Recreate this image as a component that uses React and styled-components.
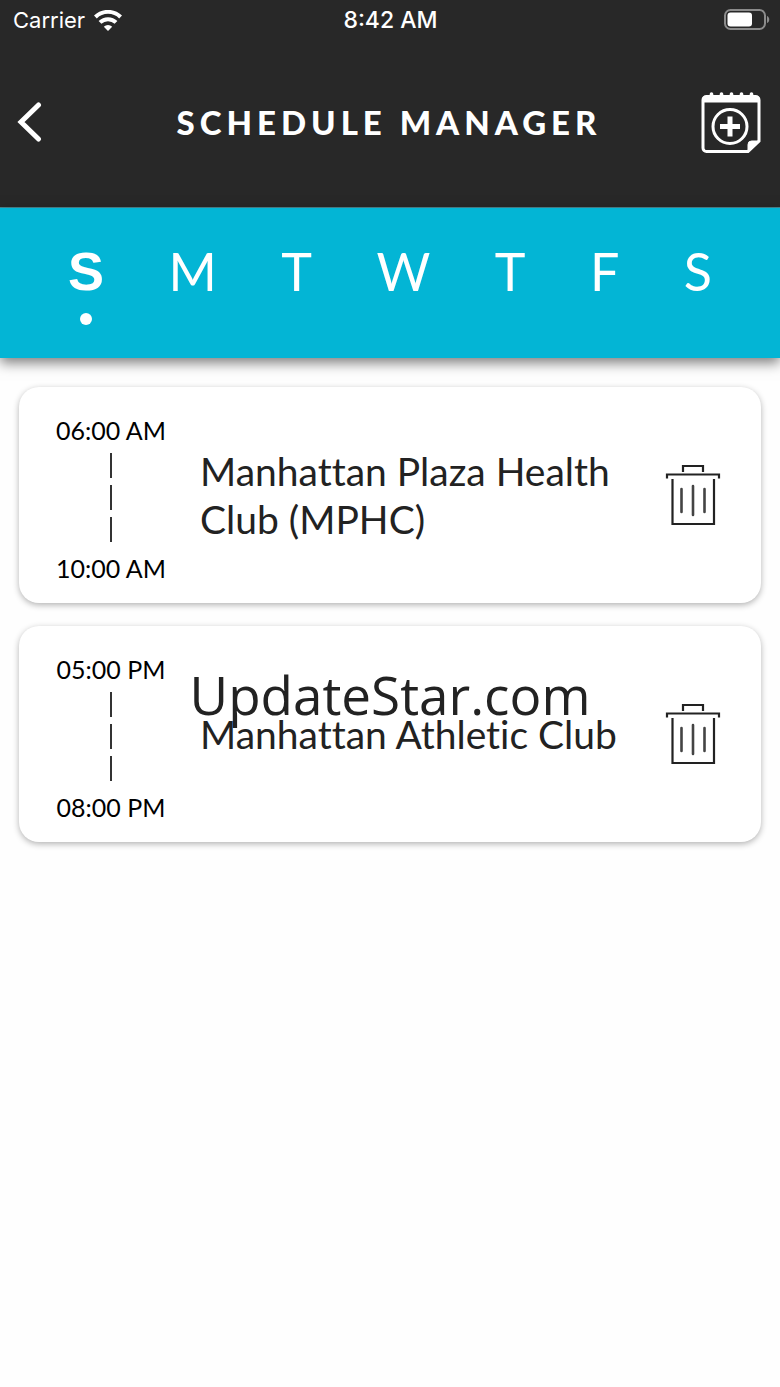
import React, { useState } from 'react'
import styled, { createGlobalStyle } from 'styled-components'

const days = ['S', 'M', 'T', 'W', 'T', 'F', 'S']
const dayNames = ['Sunday', 'Monday', 'Tuesday', 'Wednesday', 'Thursday', 'Friday', 'Saturday']

const slots = [
  { start: '06:00 AM', end: '10:00 AM', club: 'Manhattan Plaza Health Club (MPHC)' },
  { start: '05:00 PM', end: '08:00 PM', club: 'Manhattan Athletic Club' },
]

const WifiIcon = () => (
  <svg width="28" height="21" viewBox="0 0 28 21" fill="none" stroke="#fff" strokeWidth="4">
    <path d="M1.4 7a18 18 0 0 1 25.2 0" />
    <path d="M6 12.4a11.5 11.5 0 0 1 16 0" />
    <path d="M14 21l-4.2-4.2a6 6 0 0 1 8.4 0z" fill="#fff" stroke="none" />
  </svg>
)

const BatteryIcon = () => (
  <svg width="46" height="22" viewBox="0 0 46 22">
    <rect x="1" y="1" width="40" height="19" rx="5.5" fill="none" stroke="#8b8b8b" strokeWidth="2" />
    <rect x="3.5" y="3.5" width="24.5" height="14" rx="3" fill="#fff" />
    <path d="M43 7c3 1 3 6 0 7z" fill="#8b8b8b" />
  </svg>
)

const BackIcon = () => (
  <svg width="26" height="40" viewBox="0 0 26 40" fill="none" stroke="#fff" strokeWidth="5" strokeLinecap="round">
    <path d="M21.5 3L4 20l17.500 17" />
  </svg>
)

const AddIcon = () => (
  <svg width="60" height="62" viewBox="0 0 60 62" fill="none" stroke="#fff">
    <path d="M10.5 3v4M20.5 3v4M30.5 3v4M40.5 3v4M50.5 3v4" strokeWidth="3.6" strokeLinecap="round" />
    <path d="M5.5 5.5h49a3.5 3.500 0 0 1 3.5 3.5v41L47 60.5H5.5a3.5 3.5 0 0 1-3.5-3.5V9a3.5 3.5 0 0 1 3.5-3.5z" strokeWidth="3" />
    <path d="M1 9a4 4 0 0 1 4-4h50a4 4 0 0 1 4 4v2.5H1z" fill="#fff" stroke="none" />
    <path d="M47 60.5v-7a3.5 3.5 0 0 1 3.5-3.5H58z" fill="#fff" strokeWidth="1" />
    <circle cx="29" cy="35.5" r="17" strokeWidth="3" />
    <path d="M29 25.500v20M19 35.500h20" strokeWidth="5" />
  </svg>
)

const TrashIcon = () => (
  <svg width="56" height="62" viewBox="0 0 56 62" fill="none" stroke="#222" strokeWidth="2.2">
    <path d="M2 14.5v-4h52v4M18 8V2h20v6" />
    <path d="M7.5 15v45H49V15" />
    <path d="M16.5 25v23M28 22v29M39.5 25v23" stroke="#444" strokeWidth="2.6" strokeLinecap="round" />
  </svg>
)

const App = () => {
  const [active, setActive] = useState(0)

  return (
    <Page>
      <GlobalStyle />
      <Header>
        <StatusBar>
          <Carrier>
            Carrier <WifiIcon />
          </Carrier>
          <Clock>8:42 AM</Clock>
          <Battery>
            <BatteryIcon />
          </Battery>
        </StatusBar>
        <NavBar>
          <IconButton aria-label="Back">
            <BackIcon />
          </IconButton>
          <Title>SCHEDULE MANAGER</Title>
          <IconButton $end aria-label="Add schedule">
            <AddIcon />
          </IconButton>
        </NavBar>
      </Header>

      <DayBar>
        {days.map((day, i) => (
          <Day
            key={dayNames[i]}
            $active={i === active}
            aria-label={dayNames[i]}
            aria-pressed={i === active}
            onClick={() => setActive(i)}
          >
            {day}
            <Dot $active={i === active} />
          </Day>
        ))}
      </DayBar>

      <List>
        {slots.map((slot) => (
          <Card key={slot.club}>
            <Times>
              <span>{slot.start}</span>
              <Dashes>
                <i />
                <i />
                <i />
              </Dashes>
              <span>{slot.end}</span>
            </Times>
            <Club>{slot.club}</Club>
            <IconButton aria-label={`Delete ${slot.club}`}>
              <TrashIcon />
            </IconButton>
          </Card>
        ))}
      </List>

      <Watermark>UpdateStar.com</Watermark>
    </Page>
  )
}

const GlobalStyle = createGlobalStyle`
  * {
    box-sizing: border-box;
  }

  body {
    margin: 0;
    background: #fefefe;
    color: #222;
    font-family: Lato, "Liberation Sans", sans-serif;
    font-variant-ligatures: none;
  }
`

const Page = styled.div`
  position: relative;
  min-height: 100vh;
`

const Header = styled.header`
  background: #282828;
  color: #fff;
  border-bottom: 1px solid #4d8791;
`

const StatusBar = styled.div`
  display: grid;
  grid-template-columns: 1fr auto 1fr;
  align-items: center;
  height: 40px;
  padding: 0 10px 0 11px;
  font: 400 22px/28px Inter, "Liberation Sans", sans-serif;
`

const Carrier = styled.div`
  display: flex;
  align-items: center;
  gap: 9px;
  padding-left: 2px;
`

const Clock = styled.div`
  font-size: 23px;
  font-weight: 500;
`

const Battery = styled.div`
  display: flex;
  justify-content: flex-end;
`

const NavBar = styled.div`
  display: grid;
  grid-template-columns: 1fr auto 1fr;
  align-items: center;
  height: 167px;
  padding: 0 19px 3px 17px;
`

const Title = styled.h1`
  margin: 0;
  font-size: 33px;
  line-height: 40px;
  font-weight: 900;
  letter-spacing: 5px;
`

const IconButton = styled.button`
  display: flex;
  justify-self: ${(props) => (props.$end ? 'end' : 'start')};
  padding: 0;
  border: none;
  background: none;
  cursor: pointer;
`

const DayBar = styled.nav`
  display: flex;
  justify-content: space-between;
  align-items: flex-start;
  height: 150px;
  padding: 31px 68px 0;
  background: #03b5d5;
  box-shadow: 0 5px 12px rgba(0, 0, 0, 0.5);
`

const Day = styled.button`
  display: flex;
  flex-direction: column;
  align-items: center;
  gap: 10px;
  padding: 0;
  border: none;
  background: none;
  color: #fff;
  font-family: ${(props) => (props.$active ? '"Liberation Sans"' : 'Lato')}, sans-serif;
  font-size: ${(props) => (props.$active ? 54 : 52)}px;
  line-height: 64px;
  font-weight: ${(props) => (props.$active ? 700 : 400)};
  cursor: pointer;
`

const Dot = styled.span`
  width: 12px;
  height: 12px;
  border-radius: 50%;
  background: ${(props) => (props.$active ? '#fff' : 'transparent')};
`

const List = styled.main`
  display: flex;
  flex-direction: column;
  gap: 23px;
  padding: 29px 19px;
`

const Card = styled.section`
  display: flex;
  align-items: center;
  min-height: 216px;
  padding: 0 40px 0 32px;
  border-radius: 20px;
  background: #fff;
  box-shadow: 0 2px 6px rgba(0, 0, 0, 0.3);
`

const Times = styled.div`
  display: flex;
  flex-direction: column;
  align-items: center;
  width: 120px;
  padding-top: 8px;
  color: #000;
  font-size: 25px;
  line-height: 32px;
`

const Dashes = styled.div`
  display: flex;
  flex-direction: column;
  gap: 7px;
  padding: 7px 0 10px;

  i {
    width: 2px;
    height: 25px;
    background: #333;
  }
`

const Club = styled.h2`
  flex: 1;
  margin: 0;
  padding: 0 20px 0 29px;
  font-size: 39px;
  line-height: 48px;
  font-weight: 400;
`

const Watermark = styled.div`
  position: absolute;
  inset: 0;
  display: grid;
  place-items: center;
  padding-top: 2px;
  font: 400 53px/76px "Open Sans", "Noto Sans", sans-serif;
  pointer-events: none;
`

export default App
